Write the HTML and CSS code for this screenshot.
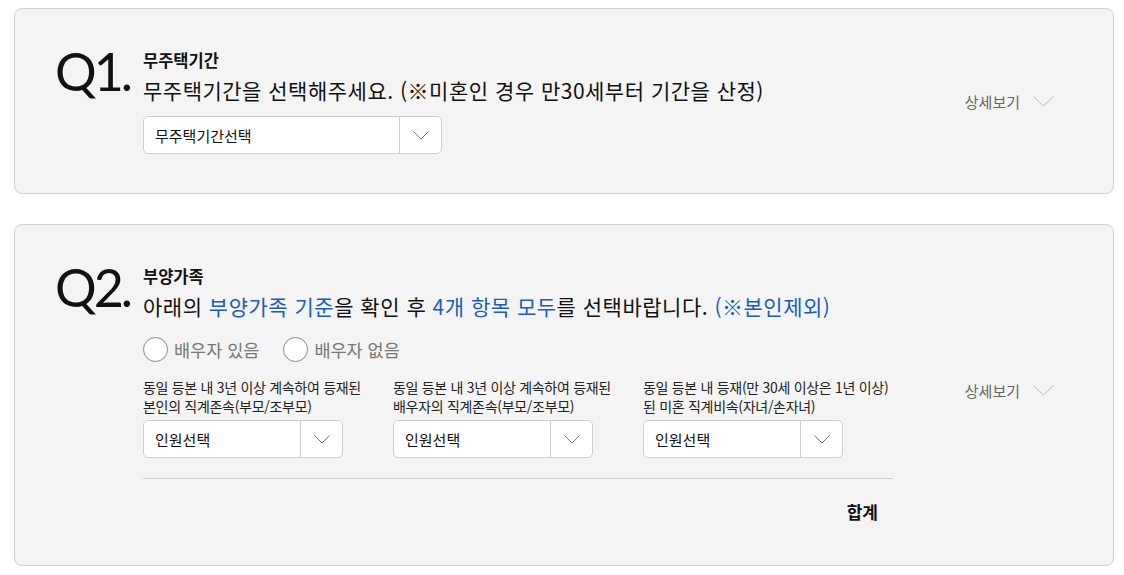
FILE: index.html
```html
<!DOCTYPE html>
<html lang="ko">
<head>
<meta charset="utf-8">
<link rel="stylesheet" href="styles.css">
</head>
<body>
<div class="page">
  <section class="card">
    <div class="qnum">Q1.</div>
    <div class="content">
      <h3 class="title">무주택기간</h3>
      <p class="sub">무주택기간을 선택해주세요. (※미혼인 경우 만30세부터 기간을 산정)</p>
      <div class="select wide">
        <span class="sel-text">무주택기간선택</span>
        <span class="sel-arrow"><svg width="16" height="9" viewBox="0 0 16 9"><path d="M0.5 0.5 L8 8 L15.5 0.5" fill="none" stroke="#777" stroke-width="1"/></svg></span>
      </div>
    </div>
    <div class="detail">상세보기 <svg width="21" height="11" viewBox="0 0 21 11"><path d="M0.5 0.5 L10.5 10 L20.5 0.5" fill="none" stroke="#bbb" stroke-width="1"/></svg></div>
  </section>

  <section class="card">
    <div class="qnum">Q2.</div>
    <div class="content">
      <h3 class="title">부양가족</h3>
      <p class="sub">아래의 <span class="blue">부양가족 기준</span>을 확인 후 <span class="blue">4개 항목 모두</span>를 선택바랍니다. <span class="blue">(※본인제외)</span></p>
      <div class="radios">
        <label class="radio"><span class="circle"></span>배우자 있음</label>
        <label class="radio"><span class="circle"></span>배우자 없음</label>
      </div>
      <div class="cols">
        <div class="col">
          <p class="lbl">동일 등본 내 3년 이상 계속하여 등재된<br>본인의 직계존속(부모/조부모)</p>
          <div class="select">
            <span class="sel-text">인원선택</span>
            <span class="sel-arrow"><svg width="16" height="9" viewBox="0 0 16 9"><path d="M0.5 0.5 L8 8 L15.5 0.5" fill="none" stroke="#777" stroke-width="1"/></svg></span>
          </div>
        </div>
        <div class="col">
          <p class="lbl">동일 등본 내 3년 이상 계속하여 등재된<br>배우자의 직계존속(부모/조부모)</p>
          <div class="select">
            <span class="sel-text">인원선택</span>
            <span class="sel-arrow"><svg width="16" height="9" viewBox="0 0 16 9"><path d="M0.5 0.5 L8 8 L15.5 0.5" fill="none" stroke="#777" stroke-width="1"/></svg></span>
          </div>
        </div>
        <div class="col">
          <p class="lbl">동일 등본 내 등재(만 30세 이상은 1년 이상)<br>된 미혼 직계비속(자녀/손자녀)</p>
          <div class="select">
            <span class="sel-text">인원선택</span>
            <span class="sel-arrow"><svg width="16" height="9" viewBox="0 0 16 9"><path d="M0.5 0.5 L8 8 L15.5 0.5" fill="none" stroke="#777" stroke-width="1"/></svg></span>
          </div>
        </div>
      </div>
      <div class="total">합계</div>
    </div>
    <div class="detail">상세보기 <svg width="21" height="11" viewBox="0 0 21 11"><path d="M0.5 0.5 L10.5 10 L20.5 0.5" fill="none" stroke="#bbb" stroke-width="1"/></svg></div>
  </section>
</div>
</body>
</html>
```

FILE: styles.css
```css
* { box-sizing: border-box; }
html, body { margin: 0; padding: 0; background: #fff; }
body {
  font-family: "Noto Sans CJK KR", "Noto Sans", sans-serif;
  color: #111;
}
.page {
  padding: 8px 10px 0 14px;
  display: flex;
  flex-direction: column;
  gap: 30px;
}
.card {
  width: 1100px;
  border: 1px solid #cfcfcf;
  border-radius: 8px;
  background: #f4f4f4;
  display: flex;
  align-items: flex-start;
  padding: 41px 59px 39px 40px;
}
.qnum {
  width: 88px;
  flex: none;
  font-family: "Lato", sans-serif;
  font-weight: 400;
  font-size: 52px;
  line-height: 54px;
  letter-spacing: -3px;
  color: #111;
  margin-top: -6px;
}
.content {
  flex: 1;
}
.title {
  margin: 0;
  font-size: 16.5px;
  line-height: 20px;
  font-weight: 700;
}
.sub {
  margin: 7px 0 0;
  font-size: 21px;
  line-height: 26px;
  letter-spacing: 0.5px;
}
.blue { color: #1d5cb8; }
.select {
  margin-top: 13px;
  width: 200px;
  height: 38px;
  background: #fff;
  border: 1px solid #cfcfcf;
  border-radius: 5px;
  display: flex;
  align-items: center;
}
.select.wide { width: 299px; }
.sel-text {
  flex: 1;
  padding-left: 11px;
  font-size: 15px;
  color: #111;
}
.sel-arrow {
  width: 42px;
  height: 100%;
  border-left: 1px solid #cfcfcf;
  display: flex;
  align-items: center;
  justify-content: center;
}
.detail {
  align-self: center;
  display: flex;
  align-items: center;
  gap: 13px;
  font-size: 15px;
  color: #666;
  margin-top: -2px;
  margin-left: -3px;
}
.card + .card .detail { margin-top: -12px; }
.radios {
  display: flex;
  gap: 24px;
  margin-top: 18px;
}
.radio {
  display: flex;
  align-items: center;
  gap: 6px;
  font-size: 17.5px;
  color: #777;
  line-height: 25px;
}
.circle {
  width: 25px;
  height: 25px;
  border: 1.5px solid #888;
  border-radius: 50%;
  background: #fff;
}
.cols {
  display: grid;
  grid-template-columns: 250px 250px 250px;
  margin-top: 16px;
  width: 750px;
  padding-bottom: 20px;
  border-bottom: 1px solid #cfcfcf;
}
.lbl {
  margin: 0;
  font-size: 14px;
  line-height: 19px;
  letter-spacing: -0.3px;
  color: #222;
}
.col .select { margin-top: 4px; }
.total {
  width: 750px;
  text-align: right;
  padding-right: 15px;
  margin-top: 23px;
  font-size: 17px;
  line-height: 20px;
  font-weight: 700;
  margin-bottom: 4px;
}
```
